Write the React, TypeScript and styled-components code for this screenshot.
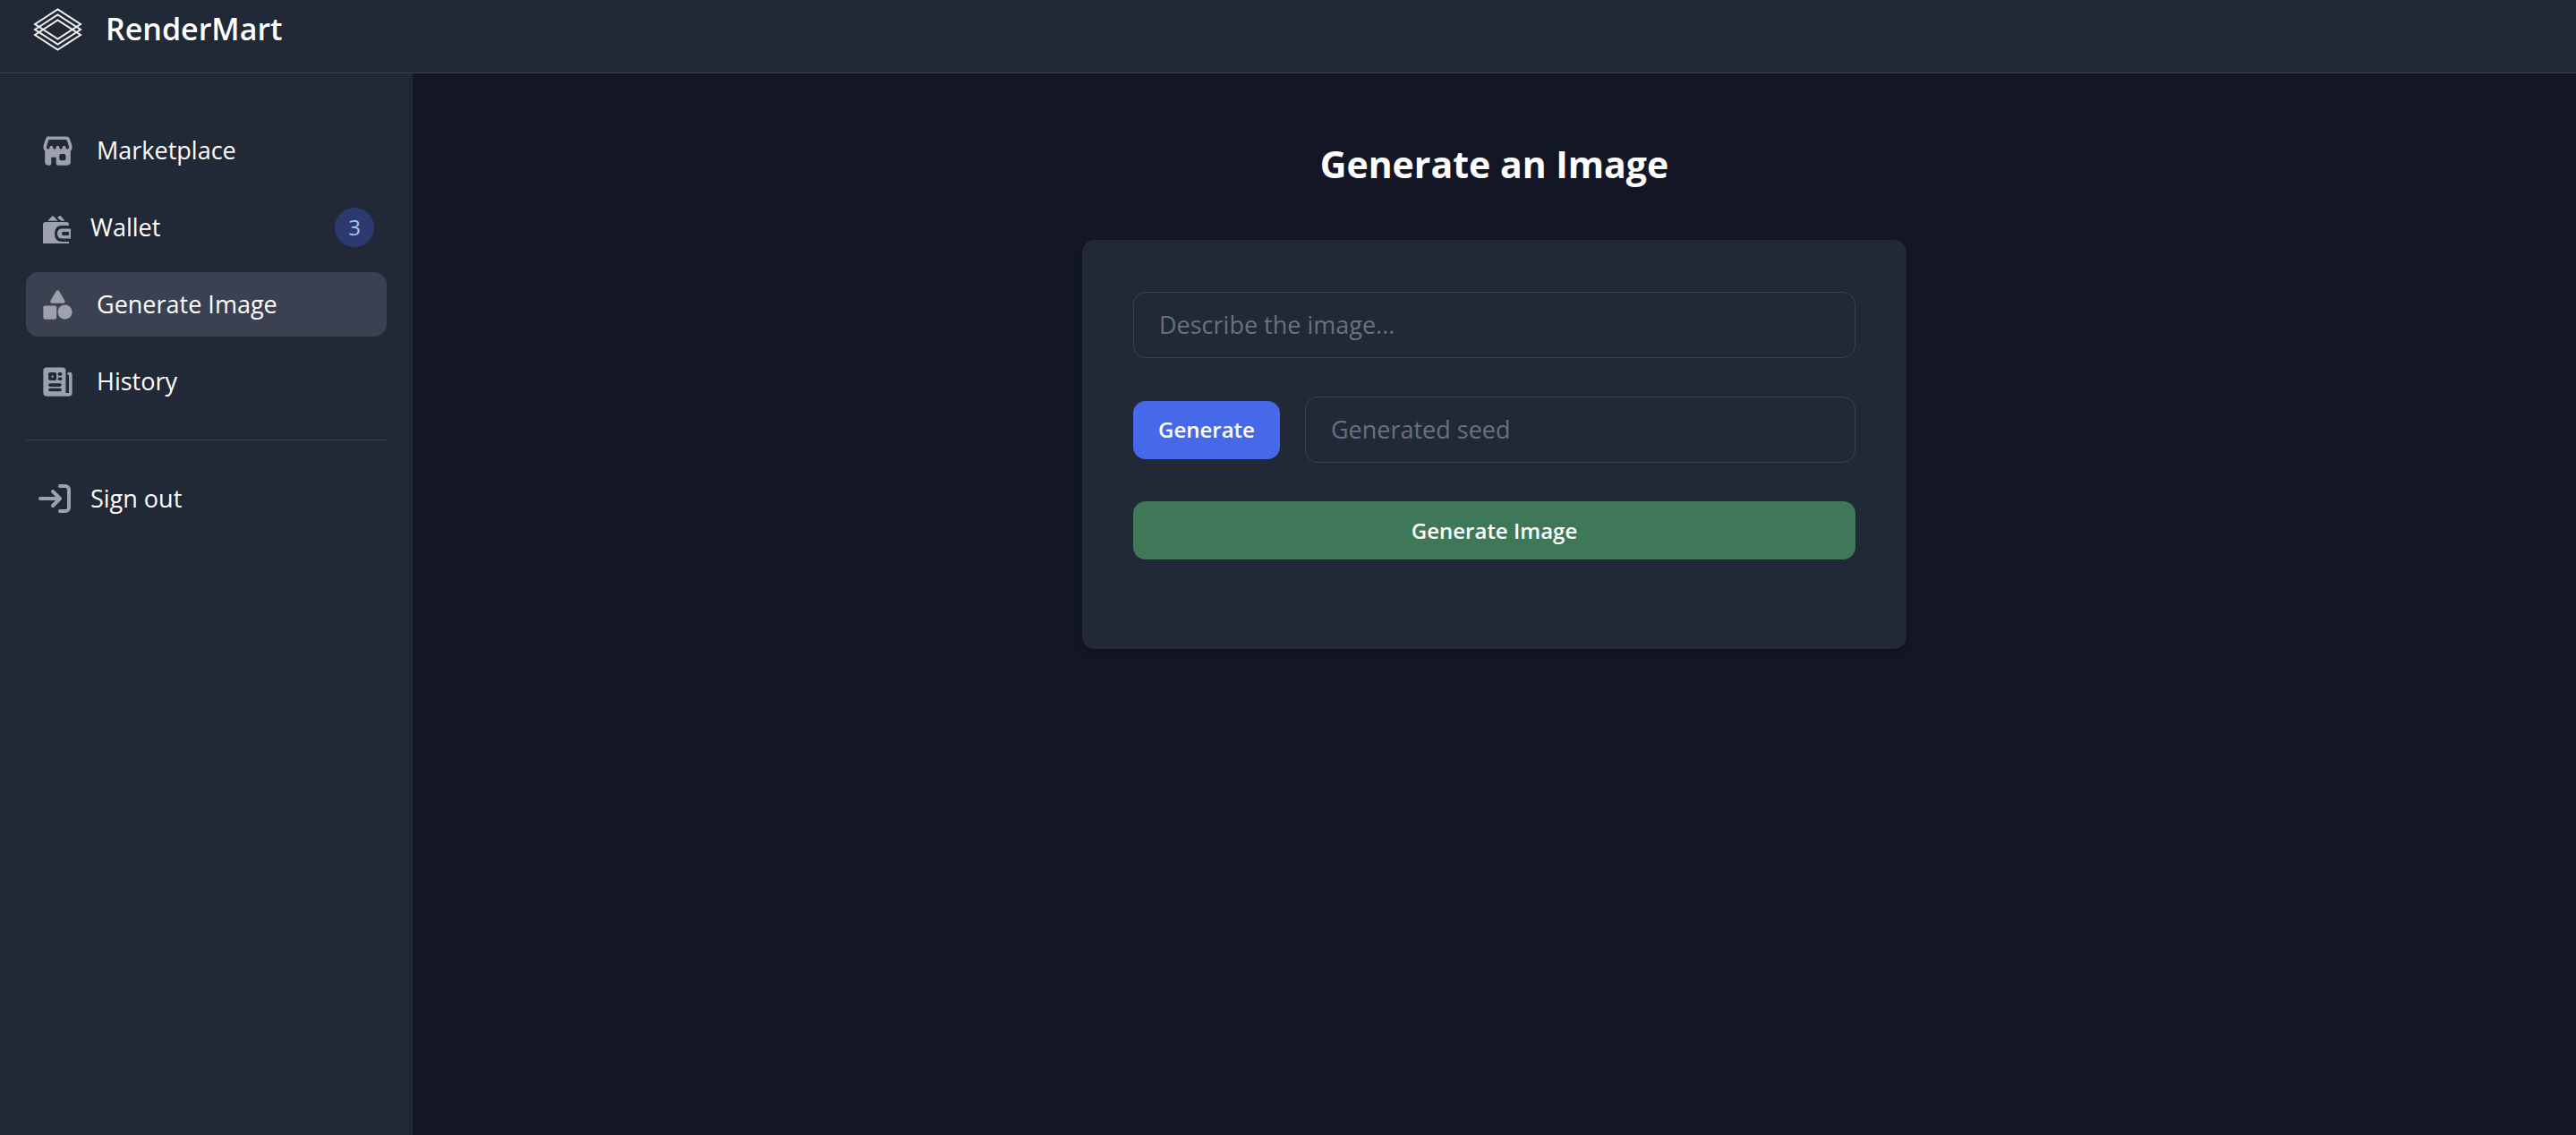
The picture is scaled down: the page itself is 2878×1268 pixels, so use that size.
import React from "react";
import styled, { createGlobalStyle } from "styled-components";

const color = {
  page: "#131624",
  panel: "#222936",
  line: "#3a404d",
  active: "#3b4150",
  icon: "#9da1ae",
  placeholder: "#6a707e",
  blue: "#4569e8",
  green: "#3f7858",
};

const GlobalStyle = createGlobalStyle`
  *, *::before, *::after { box-sizing: border-box; }
  body {
    margin: 0;
    background: ${color.page};
    color: #fff;
    font-family: "Open Sans", "Noto Sans", sans-serif;
    font-size: 27px;
    line-height: 44px;
  }
  button, input { font: inherit; }
`;

const Page = styled.div`
  display: flex;
  flex-direction: column;
  min-height: 100vh;
`;

const Header = styled.header`
  display: flex;
  align-items: flex-start;
  height: 82px;
  padding: 4px 36px;
  background: ${color.panel};
  border-bottom: 1px solid ${color.line};
`;

const Brand = styled.a`
  display: flex;
  align-items: center;
  gap: 24px;
  height: 56px;
  color: #fff;
  font-size: 34px;
  font-weight: 600;
  text-decoration: none;
  white-space: nowrap;
`;

const Body = styled.div`
  display: flex;
  flex: 1;
`;

const Sidebar = styled.nav`
  flex: 0 0 461px;
  padding: 50px 29px 0;
  background: ${color.panel};
`;

const NavList = styled.ul`
  display: flex;
  flex-direction: column;
  gap: 14px;
  margin: 0;
  padding: 0;
  list-style: none;

  & + & {
    margin-top: 29px;
    padding-top: 29px;
    border-top: 1px solid ${color.line};
  }
`;

const NavLink = styled.a<{ $active?: boolean }>`
  display: flex;
  align-items: center;
  gap: 22px;
  height: 72px;
  padding: 0 14px;
  border-radius: 14px;
  background: ${(p) => (p.$active ? color.active : "transparent")};
  color: #fff;
  text-decoration: none;

  svg { flex: none; color: ${color.icon}; }
`;

const Badge = styled.span`
  display: grid;
  place-items: center;
  width: 44px;
  height: 44px;
  margin-left: auto;
  border-radius: 50%;
  background: #2d3a70;
  color: #a9c5fa;
  font-size: 24px;
  font-weight: 500;
`;

const Main = styled.main`
  display: flex;
  flex: 1;
  flex-direction: column;
  align-items: center;
  gap: 60px;
  padding: 76px 58px;
`;

const Title = styled.h1`
  margin: 0;
  font-size: 41px;
  font-weight: 700;
  line-height: 50px;
`;

const Card = styled.form`
  display: flex;
  flex-direction: column;
  gap: 43px;
  width: 100%;
  max-width: 921px;
  padding: 58px 57px 100px;
  border-radius: 14px;
  background: ${color.panel};
  box-shadow: 0 7px 11px -2px rgba(0, 0, 0, 0.1), 0 4px 7px -4px rgba(0, 0, 0, 0.1);
`;

const Row = styled.div`
  display: flex;
  align-items: center;
  gap: 28px;
`;

const Field = styled.input`
  flex: 1;
  width: 100%;
  min-width: 0;
  min-height: 74px;
  padding: 14px 28px;
  border: 1px solid ${color.line};
  border-radius: 14px;
  outline: none;
  background: transparent;
  color: #fff;

  &::placeholder { color: ${color.placeholder}; opacity: 1; }
`;

const Button = styled.button<{ $tone: string }>`
  height: 65px;
  padding: 0 28px;
  border: 0;
  border-radius: 14px;
  background: ${(p) => p.$tone};
  color: #fff;
  font-size: 24px;
  font-weight: 600;
  line-height: 36px;
  cursor: pointer;
`;

const Logo = () => (
  <svg width="58" height="54" viewBox="0 0 58 54" fill="none" stroke="#f3f3f3" strokeWidth="2" aria-hidden="true">
    <path d="M3 22 28.500 5.500 54 22 28.500 38.500zM3 28l25.500-16.500L54 28 28.500 44.500zM3 34l25.500-16.500L54 34 28.500 50.500z" />
  </svg>
);

const StoreIcon = () => (
  <svg width="43" height="43" viewBox="0 0 24 24" fill="currentColor" aria-hidden="true">
    <path
      fillRule="evenodd"
      d="M5.535 7.677c.313-.98.687-2.023.926-2.677H17.46c.253.63.646 1.64.977 2.61.166.487.312.953.416 1.347.11.42.148.675.148.779 0 .18-.032.355-.09.515-.06.161-.144.3-.243.412-.1.111-.21.192-.324.245a.809.809 0 0 1-.686 0 1.004 1.004 0 0 1-.324-.245c-.1-.112-.183-.25-.242-.412a1.473 1.473 0 0 1-.091-.515 1 1 0 1 0-2 0 1.4 1.4 0 0 1-.333.927.896.896 0 0 1-.667.323.896.896 0 0 1-.667-.323A1.401 1.401 0 0 1 13 9.736a1 1 0 1 0-2 0 1.4 1.4 0 0 1-.333.927.896.896 0 0 1-.667.323.896.896 0 0 1-.667-.323A1.4 1.4 0 0 1 9 9.740v-.008a1 1 0 0 0-2 .003v.008a1.504 1.504 0 0 1-.18.712 1.220 1.220 0 0 1-.146.209l-.007.007a1.010 1.010 0 0 1-.325.248.82.82 0 0 1-.316.08.973.973 0 0 1-.563-.256 1.224 1.224 0 0 1-.102-.103A1.518 1.518 0 0 1 5 9.724v-.006a2.543 2.543 0 0 1 .029-.207c.024-.132.06-.296.11-.49.098-.385.237-.85.395-1.344ZM4 12.112a3.521 3.521 0 0 1-1-2.376c0-.349.098-.8.202-1.208.112-.441.264-.95.428-1.460.327-1.024.715-2.104.958-2.767A1.985 1.985 0 0 1 6.456 3h11.010c.803 0 1.539.481 1.844 1.243.258.641.67 1.697 1.019 2.720a22.300 22.300 0 0 1 .457 1.487c.114.433.214.903.214 1.286 0 .412-.072.821-.214 1.207A3.288 3.288 0 0 1 20 12.160V19a2 2 0 0 1-2 2h-6a1 1 0 0 1-1-1v-4H8v4a1 1 0 0 1-1 1H6a2 2 0 0 1-2-2v-6.888ZM13 15a1 1 0 0 1 1-1h2a1 1 0 0 1 1 1v2a1 1 0 0 1-1 1h-2a1 1 0 0 1-1-1v-2Z"
    />
  </svg>
);

const WalletIcon = () => (
  <svg width="36" height="36" viewBox="0 0 36 36" fill="currentColor" aria-hidden="true">
    <path d="M10.3 10.7 15 5.8q1-1 2 0l4.6 4.9zM21 7l2-1.6q1.2-1 2.2.1l4.3 5.2h-4.2z" />
    <path d="M8 12h23q3 0 3 3v1h-7.500q-8.500 0-8.500 9t8.500 9H34v2H5V15q0-3 3-3z" />
    <path fillRule="evenodd" d="M36 19.500h-9.500q-5.500 0-5.500 5.500t5.500 5.500H36zM34 23v4h-6.500q-1.500 0-1.500-2t1.500-2z" />
  </svg>
);

const ShapesIcon = () => (
  <svg width="43" height="43" viewBox="0 0 24 24" fill="currentColor" aria-hidden="true">
    <path d="M11.100 3.400a1 1 0 0 1 1.700 0l3.600 6.100a1 1 0 0 1-.9 1.500H8.400a1 1 0 0 1-.9-1.500z" />
    <rect x="3" y="12.500" width="8.300" height="8.500" rx="1" />
    <circle cx="16.500" cy="16.500" r="4.500" />
  </svg>
);

const NewsIcon = () => (
  <svg width="43" height="43" viewBox="0 0 24 24" fill="currentColor" aria-hidden="true">
    <path
      fillRule="evenodd"
      d="M5 3h10a2 2 0 0 1 2 2v14h2V7.900a1 1 0 0 1-1-1A1 1 0 0 1 19 6h.5A1.500 1.500 0 0 1 21 7.500V19a2 2 0 0 1-2 2H5a2 2 0 0 1-2-2V5a2 2 0 0 1 2-2zM7.200 6.200a1 1 0 0 0-1 1v3a1 1 0 0 0 1 1h3a1 1 0 0 0 1-1v-3a1 1 0 0 0-1-1zM8.100 8.100h1.200v1.200H8.100zM13 6.200a1 1 0 0 0 0 2h.8a1 1 0 0 0 0-2zM13 9.200a1 1 0 0 0 0 2h.8a1 1 0 0 0 0-2zM7.200 13a1 1 0 0 0 0 2h6.200a1 1 0 0 0 0-2zM7.200 16a1 1 0 0 0 0 2h6.200a1 1 0 0 0 0-2z"
    />
  </svg>
);

const SignOutIcon = () => (
  <svg width="36" height="36" viewBox="0 0 18 18" fill="none" stroke="currentColor" strokeWidth="2" strokeLinecap="round" strokeLinejoin="round" aria-hidden="true">
    <path d="M1 9h11m0 0L8 5m4 4-4 4m4-11h3a2 2 0 0 1 2 2v10a2 2 0 0 1-2 2h-3" />
  </svg>
);

export default function App() {
  return (
    <Page>
      <GlobalStyle />
      <Header>
        <Brand href="#">
          <Logo />
          RenderMart
        </Brand>
      </Header>
      <Body>
        <Sidebar aria-label="Main">
          <NavList>
            <li><NavLink href="#marketplace"><StoreIcon />Marketplace</NavLink></li>
            <li><NavLink href="#wallet"><WalletIcon />Wallet<Badge>3</Badge></NavLink></li>
            <li><NavLink href="#generate" $active aria-current="page"><ShapesIcon />Generate Image</NavLink></li>
            <li><NavLink href="#history"><NewsIcon />History</NavLink></li>
          </NavList>
          <NavList>
            <li><NavLink href="#signout"><SignOutIcon />Sign out</NavLink></li>
          </NavList>
        </Sidebar>
        <Main>
          <Title>Generate an Image</Title>
          <Card onSubmit={(e: React.FormEvent) => e.preventDefault()}>
            <Row>
              <Field type="text" aria-label="Image description" placeholder="Describe the image..." />
            </Row>
            <Row>
              <Button type="button" $tone={color.blue}>Generate</Button>
              <Field type="text" aria-label="Seed" placeholder="Generated seed" />
            </Row>
            <Button type="submit" $tone={color.green}>Generate Image</Button>
          </Card>
        </Main>
      </Body>
    </Page>
  );
}
